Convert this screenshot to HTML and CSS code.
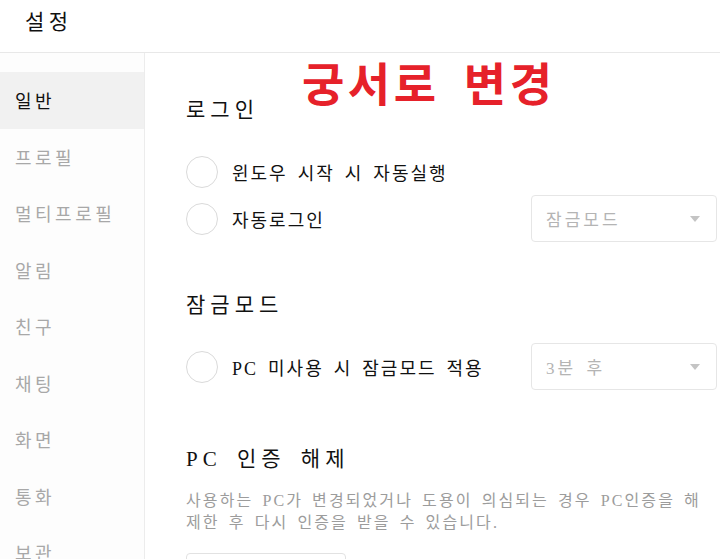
FILE: index.html
```html
<!DOCTYPE html>
<html lang="ko">
<head>
<meta charset="utf-8">
<title>설정</title>
<link rel="stylesheet" href="styles.css">
</head>
<body>
<div class="app">
  <header class="topbar"><h1 class="title">설정</h1></header>
  <div class="body">
    <nav class="sidebar">
      <div class="nav-item active">일반</div>
      <div class="nav-item">프로필</div>
      <div class="nav-item">멀티프로필</div>
      <div class="nav-item">알림</div>
      <div class="nav-item">친구</div>
      <div class="nav-item">채팅</div>
      <div class="nav-item">화면</div>
      <div class="nav-item">통화</div>
      <div class="nav-item">보관</div>
    </nav>
    <main class="content">
      <section class="section">
        <h2 class="sec-title">로그인</h2>
        <div class="row">
          <label class="check"><span class="radio"></span><span class="label">윈도우 시작 시 자동실행</span></label>
        </div>
        <div class="row">
          <label class="check"><span class="radio"></span><span class="label">자동로그인</span></label>
          <div class="select"><span>잠금모드</span><span class="caret"></span></div>
        </div>
      </section>
      <section class="section">
        <h2 class="sec-title">잠금모드</h2>
        <div class="row">
          <label class="check"><span class="radio"></span><span class="label">PC 미사용 시 잠금모드 적용</span></label>
          <div class="select"><span>3분 후</span><span class="caret"></span></div>
        </div>
      </section>
      <section class="section last">
        <h2 class="sec-title">PC 인증 해제</h2>
        <p class="desc">사용하는 PC가 변경되었거나 도용이 의심되는 경우 PC인증을 해제한 후 다시 인증을 받을 수 있습니다.</p>
        <button class="btn" type="button">PC 인증 해제</button>
      </section>
      <div class="stamp">궁서로 변경</div>
    </main>
  </div>
</div>
</body>
</html>
```
FILE: styles.css
```css
* { box-sizing: border-box; }
html, body { margin: 0; padding: 0; }
body {
  width: 720px;
  height: 559px;
  overflow: hidden;
  background: #fff;
  font-family: "Liberation Serif", "Noto Sans CJK KR", serif;
  color: #111;
}
.app { display: flex; flex-direction: column; height: 559px; }
.topbar {
  height: 53px;
  border-bottom: 1px solid #e8e8e8;
  display: flex;
  align-items: center;
  padding-left: 25px;
}
.title {
  margin: 0;
  font-size: 21px;
  font-weight: 400;
  letter-spacing: 4.5px;
  line-height: 30px;
  padding-bottom: 9px;
}
.body { display: flex; flex: 1; min-height: 0; }
.sidebar {
  width: 145px;
  flex: none;
  border-right: 1px solid #ececec;
  background: #fdfdfd;
  padding-top: 19px;
  display: flex;
  flex-direction: column;
}
.nav-item {
  height: 56.5px;
  flex: none;
  display: flex;
  align-items: center;
  padding-left: 15px;
  font-size: 18px;
  letter-spacing: 3.5px;
  color: #a8a8a8;
}
.nav-item.active { background: #f1f1f1; color: #111; }
.content {
  position: relative;
  flex: 1;
  padding: 42px 3px 0 41px;
  overflow: hidden;
}
.section { display: flex; flex-direction: column; }
.section + .section { margin-top: 48px; }
.section.last { margin-top: 54px; }
.sec-title {
  margin: 0 0 23px;
  font-size: 21px;
  font-weight: 400;
  line-height: 30px;
  letter-spacing: 5px;
  word-spacing: 5px;
}
.row {
  height: 47px;
  display: flex;
  align-items: center;
  justify-content: space-between;
}
.check { display: flex; align-items: center; gap: 14px; }
.radio {
  width: 32px;
  height: 32px;
  border-radius: 50%;
  border: 1.5px solid #dadada;
  background: #fff;
  flex: none;
}
.label { font-size: 18px; letter-spacing: 2px; word-spacing: 3.5px; }
.select {
  width: 186px;
  height: 47px;
  border: 1px solid #e6e6e6;
  border-radius: 4px;
  display: flex;
  align-items: center;
  justify-content: space-between;
  padding: 0 16px 0 14px;
  font-size: 17px;
  color: #b4b4b4;
  letter-spacing: 3px;
  word-spacing: 3px;
}
.caret {
  width: 0;
  height: 0;
  border-left: 5px solid transparent;
  border-right: 5px solid transparent;
  border-top: 6px solid #c4c4c4;
}
.desc {
  margin: -7px 0 0;
  font-size: 16px;
  line-height: 22px;
  color: #9c9c9c;
  letter-spacing: 2.1px;
  word-spacing: 3px;
}
.btn {
  margin-top: 19px;
  width: 160px;
  height: 46px;
  border: 1px solid #e2e2e2;
  border-radius: 4px;
  background: #fff;
  font-family: inherit;
  font-size: 17px;
  color: #333;
  text-align: center;
  padding: 0;
}
.stamp {
  position: absolute;
  left: 157px;
  top: 0;
  font-family: "Noto Sans CJK KR", sans-serif;
  font-weight: 700;
  font-size: 46px;
  line-height: 56px;
  color: #e6212a;
  letter-spacing: 3.5px;
  word-spacing: 8px;
  white-space: nowrap;
}
```
